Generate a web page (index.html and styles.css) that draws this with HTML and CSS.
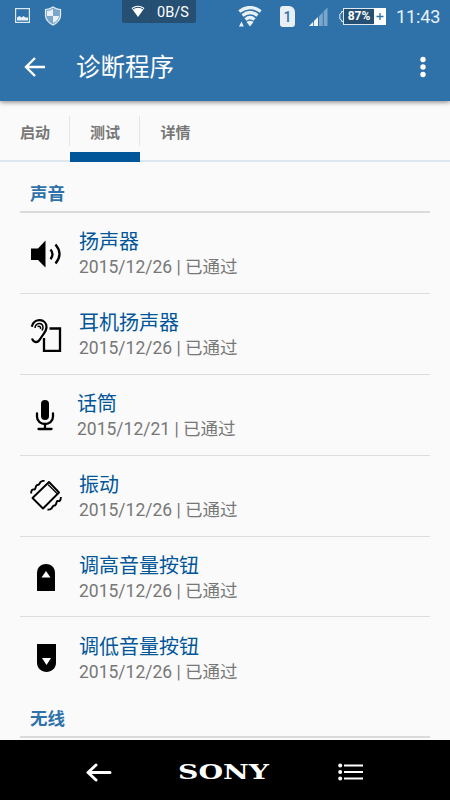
FILE: index.html
```html
<!DOCTYPE html>
<html lang="zh-CN">
<head>
  <meta charset="UTF-8" />
  <meta name="viewport" content="width=device-width, initial-scale=1.0"/>
  <title>诊断程序</title>
  <link rel="stylesheet" href="styles.css">
</head>
<body>
<div class="screen">
  <header class="app-header">
    <div class="status-bar">
      <div class="status-left">
        <svg class="icon-picture" width="15" height="15" viewBox="0 0 15 15">
          <rect x=".6" y=".6" width="13.8" height="13.8" fill="none" stroke="#dce8f2" stroke-width="1.2"/>
          <path d="M2 12.500V9.500l2.500-1.500 2 1.500 2-1.500 2 1.500 2.500 0v3z" fill="#e8f0f6"/>
        </svg>
        <svg width="18" height="20" viewBox="0 0 18 20">
          <path d="M9 1Q12.500 3.500 16.500 3.500V10Q16 15.500 9 19Q2 15.500 1.500 10V3.500Q5.500 3.500 9 1z" fill="#7ba5c9" stroke="#e4edf5" stroke-width="1.200"/>
          <path d="M9 3Q6 5 3 5V10H9zM9 10H15Q14.500 14.500 9 17z" fill="#e8f0f6"/>
        </svg>
      </div>
      <div class="net-speed">
        <svg width="14" height="13" viewBox="0 0 14 13">
          <path d="M.5 3Q7-1.500 13.500 3L7 12z" fill="#fff"/>
          <path d="M1.800 4Q7 .5 12.200 4" fill="none" stroke="#254a69" stroke-width="1"/>
        </svg>
        <span class="net-value">0B/S</span>
      </div>
      <div class="status-right">
        <svg width="24" height="21" viewBox="0 0 24 21">
          <g fill="none" stroke="#e8f0f6" stroke-width="3.200">
            <path d="M1.300 5.500Q12-2.500 22.700 5.500"/>
            <path d="M4.500 9.500Q12 3.500 19.500 9.500"/>
            <path d="M7.500 13.500Q12 9.500 16.500 13.500"/>
          </g>
          <path d="M8.500 16Q12 13.500 15.500 16L12 20.500zM1 20.500l2.500-5 2.300 5z" fill="#e8f0f6"/>
        </svg>
        <span class="sim">1</span>
        <svg width="19" height="19" viewBox="0 0 19 19">
          <path d="M0 19L4.200 14.800V19zM5 14l4-4v9H5z" fill="#f1f5f9"/>
          <path d="M10 9.200l3.800-3.900V19H10zM14.700 4.300L18.500.5V19h-3.800z" fill="#7ba5c9"/>
        </svg>
        <span class="battery">
          <svg width="4" height="11" viewBox="0 0 4 11"><path d="M4 .6H2.500V2L.8 3v5l1.700 1v1.400H4" fill="none" stroke="#dce8f2"/></svg>
          <span class="battery-level">87%</span>
          <span class="battery-plus">
            <svg width="12" height="15" viewBox="0 0 12 15"><path d="M2.500 7.500h7M6 4v7" stroke="#2f72aa" stroke-width="1.300"/></svg>
          </span>
        </span>
        <span class="clock">11:43</span>
      </div>
    </div>
    <div class="toolbar">
      <svg width="22" height="20" viewBox="0 0 22 20">
        <path d="M21 10H2.500M11 1L2 10l9 9" fill="none" stroke="#fff" stroke-width="2.400"/>
      </svg>
      <h1 class="toolbar-title">诊断程序</h1>
      <svg width="6" height="22" viewBox="0 0 6 22" fill="#fff">
        <circle cx="3" cy="3.500" r="2.700"/><circle cx="3" cy="11" r="2.700"/><circle cx="3" cy="18.500" r="2.700"/>
      </svg>
    </div>
  </header>

  <nav class="tabs">
    <a class="tab"><span>启动</span></a>
    <a class="tab active"><span>测试</span></a>
    <a class="tab"><span>详情</span></a>
  </nav>

  <main class="content">
    <h2 class="section-title">声音</h2>
    <ul class="test-list">
      <li class="test-row">
        <svg class="test-icon" width="32" height="32" viewBox="0 0 32 32">
          <path d="M1 10.500h7l7.500-8v27l-7.500-7.500H1z"/>
          <path d="M20.500 11.500q4 4.700 0 9.700M25.500 6.500q8 9.500 0 19" fill="none" stroke="#000" stroke-width="2.300"/>
        </svg>
        <div class="test-text"><div class="test-name">扬声器</div><div class="test-result">2015/12/26 | 已通过</div></div>
      </li>
      <li class="test-row">
        <svg class="test-icon" width="32" height="34" viewBox="0 0 32 34">
          <g fill="none" stroke="#000">
            <path d="M1.800 8.700C3.500-.2 16.500.2 16.500 9c0 5-3.500 7-6 11.500C8 25.500 3.500 25 2 20.500" stroke-width="2.200"/>
            <path d="M5 10C5.500 4 13 4 13 9.500c0 1.500-.5 2-1 3M7.500 8.500c2-1 3.500.5 3 2.500" stroke-width="1.500"/>
            <path d="M19.500 10.500H30V33H14V20" stroke-width="2.300"/>
          </g>
        </svg>
        <div class="test-text"><div class="test-name">耳机扬声器</div><div class="test-result">2015/12/26 | 已通过</div></div>
      </li>
      <li class="test-row mic-row">
        <svg class="test-icon" width="20" height="32" viewBox="0 0 20 32">
          <rect x="6" y="1" width="8" height="20" rx="4"/>
          <path d="M2 14.500v3c0 10 16 10 16 0v-3M10 25v4M3.500 30h13" fill="none" stroke="#000" stroke-width="2.300" stroke-linecap="round"/>
        </svg>
        <div class="test-text"><div class="test-name">话筒</div><div class="test-result">2015/12/21 | 已通过</div></div>
      </li>
      <li class="test-row">
        <svg class="test-icon" width="32" height="32" viewBox="0 0 32 32">
          <g fill="none" stroke="#000" stroke-width="1.900" stroke-linejoin="round">
            <path d="M2.500 18L19 2l10 10.500L13 28.500z"/>
            <path d="M18 4.500L27.500 14" stroke-width="1.200"/>
            <path d="M1.200 13.500C1 10 2.500 9 4.500 9.500c1.500-.5.500-3 2.500-4.500 2 .5 2-.5 3.500-3q2-1.500 4-1M30.800 17c.2 3.500-1.300 4.500-3.300 4-1.500.5-.5 3-2.500 4.500-2-.5-2 .5-3.500 3q-2 1.500-4 1" stroke-width="1.900"/>
          </g>
        </svg>
        <div class="test-text"><div class="test-name">振动</div><div class="test-result">2015/12/26 | 已通过</div></div>
      </li>
      <li class="test-row">
        <svg class="test-icon" width="18" height="27" viewBox="0 0 18 27">
          <path d="M0 27V9C0-3 18-3 18 9v18z"/>
          <path d="M4.500 13.500L9 7l4.500 6.500z" fill="#fff"/>
        </svg>
        <div class="test-text"><div class="test-name">调高音量按钮</div><div class="test-result">2015/12/26 | 已通过</div></div>
      </li>
      <li class="test-row">
        <svg class="test-icon" width="19" height="28" viewBox="0 0 19 28">
          <path d="M0 0v18.500c0 12.500 19 12.500 19 0V0z"/>
          <path d="M5 14l4.500 7 4.500-7z" fill="#fff"/>
        </svg>
        <div class="test-text"><div class="test-name">调低音量按钮</div><div class="test-result">2015/12/26 | 已通过</div></div>
      </li>
    </ul>
    <h2 class="section-title">无线</h2>
  </main>

  <footer class="nav-bar">
    <svg width="26" height="20" viewBox="0 0 26 20">
      <path d="M24 10.500H3M10 3L2 10.500l8 7.500" fill="none" stroke="#fff" stroke-width="3" stroke-linecap="round" stroke-linejoin="round"/>
    </svg>
    <svg class="brand" width="96" height="30" viewBox="0 0 96 30">
      <text x="2" y="21.500" textLength="91" lengthAdjust="spacingAndGlyphs">SONY</text>
    </svg>
    <svg width="26" height="18" viewBox="0 0 26 18" fill="#fff">
      <circle cx="2.200" cy="2.500" r="2"/><circle cx="2.200" cy="9" r="2"/><circle cx="2.200" cy="15.500" r="2"/>
      <path d="M6 1.500h19v2H6zM6 8h19v2H6zM6 14.500h19v2H6z"/>
    </svg>
  </footer>
</div>
</body>
</html>
```
FILE: styles.css
```css
* {
  box-sizing: border-box;
}
body {
  margin: 0;
  background: #fafafa;
  font-family: Roboto, "Noto Sans CJK SC", sans-serif;
}
svg {
  display: block;
  flex-shrink: 0;
}
.screen {
  display: flex;
  flex-direction: column;
  width: 450px;
  height: 800px;
  overflow: hidden;
}

/* Header */
.app-header {
  height: 101px;
  flex-shrink: 0;
  background: #2f72aa;
  color: #fff;
  box-shadow: 0 1px 5px rgba(0, 0, 0, 0.5);
}
.status-bar {
  display: flex;
  height: 32px;
}
.status-left {
  display: flex;
  gap: 14px;
  width: 122px;
  padding: 6px 0 0 15px;
}
.icon-picture {
  margin-top: 2px;
}
.net-speed {
  display: flex;
  align-items: center;
  width: 74px;
  height: 23px;
  padding-left: 9px;
  background: #254f73;
  border-radius: 0 0 2px 2px;
}
.net-value {
  height: 23px;
  margin-left: 6px;
  padding-left: 5px;
  border-left: 1px solid #2c4a63;
  font-size: 14.5px;
  line-height: 25px;
}
.status-right {
  display: flex;
  align-items: center;
  margin-left: 42px;
}
.sim {
  width: 15px;
  height: 21px;
  margin: 0 14px 0 18px;
  background: #e8f0f6;
  border-radius: 3px;
  border-top-right-radius: 6px;
  color: #2f72aa;
  font-size: 14px;
  font-weight: 500;
  line-height: 22px;
  text-align: center;
}
.battery {
  display: flex;
  align-items: center;
  margin-left: 11px;
}
.battery-level {
  width: 31px;
  height: 17px;
  background: #254f73;
  border: 1px solid #dce8f2;
  border-right: 0;
  font-size: 12px;
  font-weight: 700;
  line-height: 15px;
  text-align: center;
}
.battery-plus {
  width: 12px;
  height: 17px;
  padding-top: 1px;
  background: #fff;
}
.clock {
  margin-left: 10px;
  color: #e8f0f6;
  font-size: 18px;
  letter-spacing: -0.1px;
}
.toolbar {
  display: flex;
  align-items: center;
  height: 69px;
  padding: 0 24px;
}
.toolbar-title {
  flex: 1;
  margin: 0 0 0 30px;
  padding-top: 2px;
  font-size: 24.5px;
  font-weight: 400;
  line-height: 36px;
}

/* Tabs */
.tabs {
  display: flex;
  flex-shrink: 0;
  height: 61px;
  border-bottom: 2px solid #dce6ee;
}
.tab {
  width: 70px;
  height: 61px;
  padding-top: 15px;
  color: #777;
  font-size: 15px;
  font-weight: 700;
  text-align: center;
}
.tab span {
  display: block;
  height: 30px;
  padding-left: 1px;
  border-right: 1px solid #dfe7ee;
  line-height: 34px;
}
.tab:last-child span {
  border-right: 0;
}
.tab.active {
  border-bottom: 10px solid #015699;
}

/* Test list */
.content {
  flex: 1;
  min-height: 0;
  padding: 11px 20px 0;
  overflow: hidden;
}
.section-title {
  height: 40px;
  margin: 0;
  padding-left: 10px;
  border-bottom: 2px solid #dadada;
  color: #2f72aa;
  font-size: 17.5px;
  font-weight: 700;
  line-height: 43px;
}
.test-list {
  margin: 0;
  padding: 0;
  list-style: none;
}
.test-row {
  display: flex;
  align-items: center;
  height: 80.9px;
  padding: 3px 0 0 10px;
  border-bottom: 1px solid #dedede;
}
.test-row:last-child {
  border-bottom: 0;
}
.test-icon {
  margin: 0 auto;
}
.test-row:nth-child(n+3) .test-icon {
  margin-bottom: 2px;
}
.test-text {
  width: 368px;
  padding-left: 17px;
}
.mic-row .test-text {
  width: 370px;
}
.test-name {
  color: #015699;
  font-size: 20px;
  line-height: 26px;
}
.test-result {
  color: #777;
  font-size: 17.5px;
  line-height: 24px;
}

/* System navigation */
.nav-bar {
  display: flex;
  align-items: center;
  justify-content: space-between;
  height: 60px;
  flex-shrink: 0;
  padding: 3px 86px 0;
  background: #000;
}
.brand {
  margin-right: 2px;
}
.brand text {
  fill: #fff;
  font-family: "DejaVu Serif", serif;
  font-size: 20.5px;
  font-weight: 700;
}
```
